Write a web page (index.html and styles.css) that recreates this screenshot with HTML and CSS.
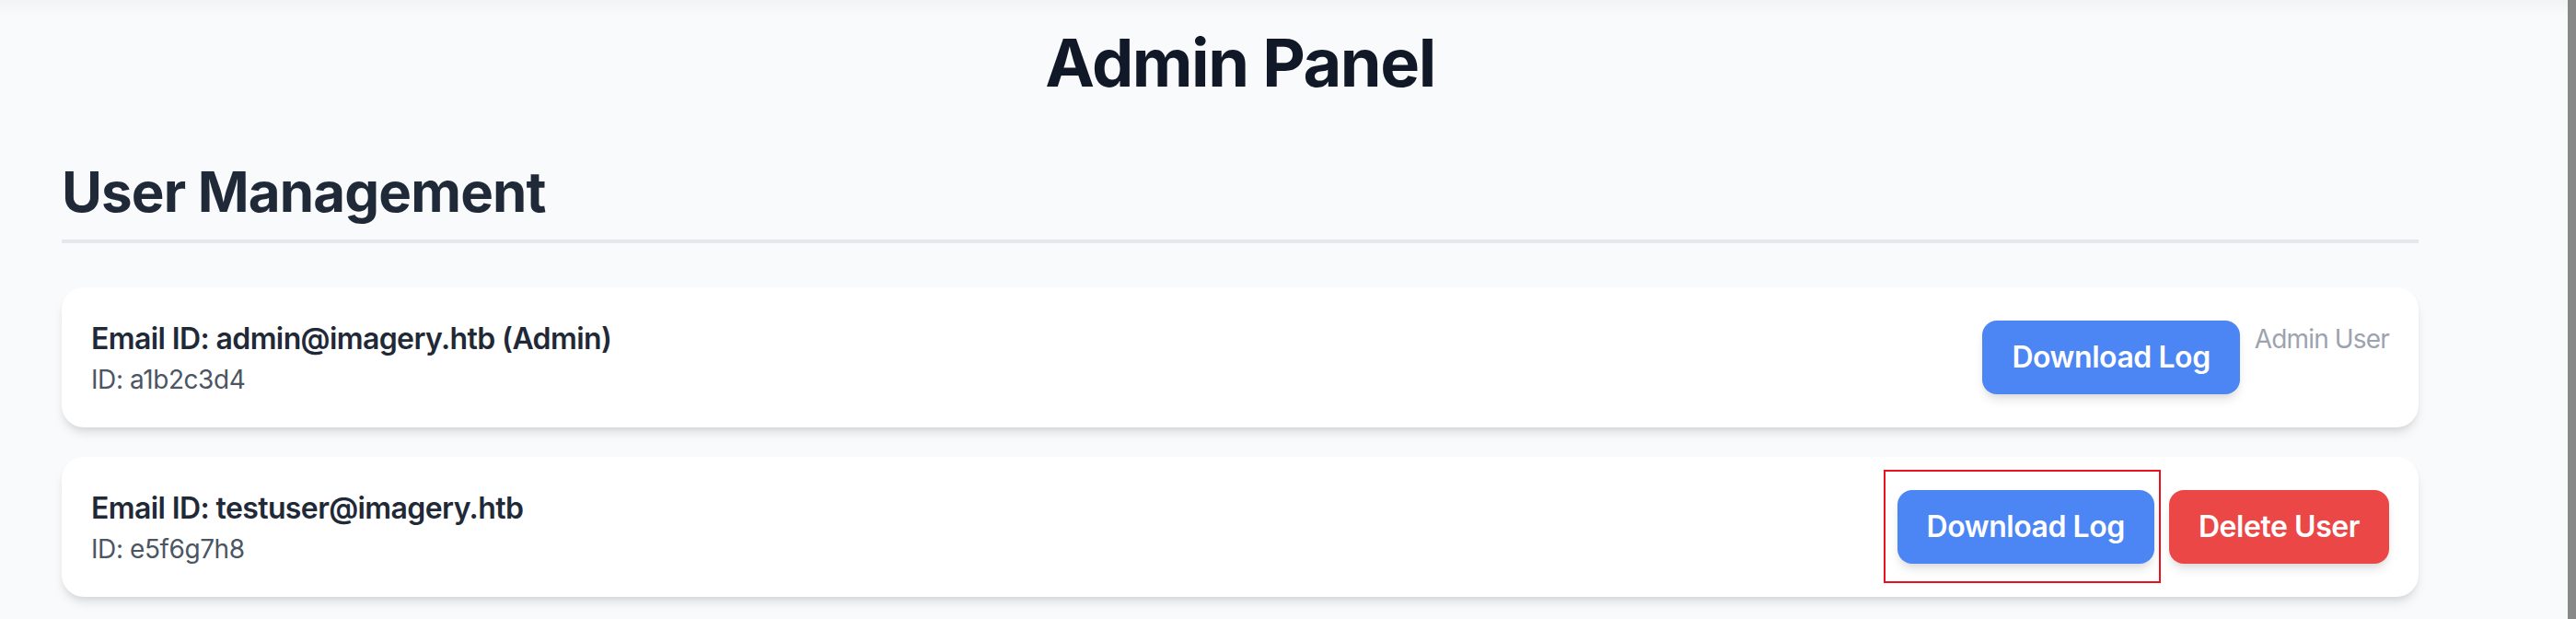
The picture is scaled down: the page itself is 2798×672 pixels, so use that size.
FILE: index.html
```html
<!DOCTYPE html>
<html lang="en">
<head>
<meta charset="utf-8">
<title>Admin Panel</title>
<link rel="stylesheet" href="styles.css">
</head>
<body>
<div class="page">
  <main class="container">
    <h1 class="title">Admin Panel</h1>
    <h2 class="section-title">User Management</h2>
    <div class="user-list">
      <div class="user-card">
        <div class="user-info">
          <p class="user-email">Email ID: admin@imagery.htb (Admin)</p>
          <p class="user-id">ID: a1b2c3d4</p>
        </div>
        <div class="user-actions">
          <button class="btn btn-blue">Download Log</button>
          <span class="user-note">Admin User</span>
        </div>
      </div>
      <div class="user-card">
        <div class="user-info">
          <p class="user-email">Email ID: testuser@imagery.htb</p>
          <p class="user-id">ID: e5f6g7h8</p>
        </div>
        <div class="user-actions">
          <div class="highlight-wrap">
            <button class="btn btn-blue">Download Log</button>
            <span class="highlight-box"></span>
          </div>
          <button class="btn btn-red">Delete User</button>
        </div>
      </div>
    </div>
  </main>
</div>
<div class="scrollbar"></div>
</body>
</html>
```

FILE: styles.css
```css
html, body {
  margin: 0;
  padding: 0;
}

body {
  display: flex;
  height: 672px;
  overflow: hidden;
  background: linear-gradient(to bottom, #f2f3f5 0px, #f9fafb 16px, #f9fafb 100%);
  font-family: Inter, "Liberation Sans", sans-serif;
  color: #1f2937;
}

.page {
  flex: 1;
  padding: 28px 0 0 67px;
}

.container {
  width: 2560px;
}

.title {
  margin: 0 0 64px;
  font-size: 72px;
  line-height: 80px;
  font-weight: 700;
  letter-spacing: -0.02em;
  text-align: center;
  color: #111827;
}

.section-title {
  margin: 0 0 48px;
  padding-bottom: 16px;
  border-bottom: 4px solid #e5e7eb;
  font-size: 60px;
  line-height: 72px;
  font-weight: 700;
  letter-spacing: -0.014em;
  color: #1f2937;
}

.user-list {
  display: flex;
  flex-direction: column;
  gap: 32px;
}

.user-card {
  display: flex;
  justify-content: space-between;
  align-items: center;
  padding: 32px;
  background: #ffffff;
  border-radius: 24px;
  box-shadow: 0 8px 12px -2px rgba(0, 0, 0, 0.1), 0 4px 8px -4px rgba(0, 0, 0, 0.1);
}

.user-email {
  margin: 0;
  font-size: 32px;
  line-height: 48px;
  font-weight: 600;
  letter-spacing: -0.019em;
  color: #1f2937;
}

.user-id {
  margin: 0;
  font-size: 28px;
  line-height: 40px;
  letter-spacing: -0.015em;
  color: #4b5563;
}

.user-actions {
  display: flex;
  align-items: flex-start;
  gap: 16px;
}

.btn {
  border: none;
  padding: 16px 32px;
  border-radius: 16px;
  font-family: Inter, "Liberation Sans", sans-serif;
  font-size: 32px;
  line-height: 48px;
  font-weight: 600;
  letter-spacing: -0.014em;
  color: #ffffff;
  box-shadow: 0 8px 12px -2px rgba(0, 0, 0, 0.1), 0 4px 8px -4px rgba(0, 0, 0, 0.1);
  cursor: pointer;
}

.btn-blue {
  background: #4c85f4;
}

.btn-red {
  background: #ec4747;
}

.user-note {
  font-size: 28px;
  line-height: 40px;
  letter-spacing: -0.03em;
  color: #9ca3af;
}

.highlight-wrap {
  position: relative;
  display: flex;
}

.highlight-box {
  position: absolute;
  left: -15px;
  right: -7px;
  top: -22px;
  bottom: -21px;
  border: 2px solid #e8121f;
  pointer-events: none;
}

.scrollbar {
  width: 9px;
  flex: none;
  background: #888888;
}
```
